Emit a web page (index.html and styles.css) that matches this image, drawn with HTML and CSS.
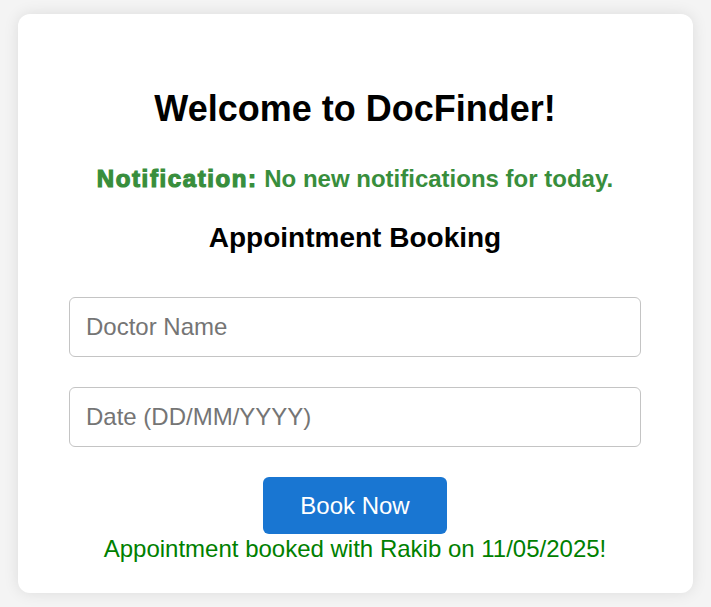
FILE: index.html
```html
<!DOCTYPE html>
<html lang="en">
<head>
<meta charset="utf-8">
<title>DocFinder</title>
<link rel="stylesheet" href="styles.css">
</head>
<body>
<div class="card">
  <h1 class="title">Welcome to DocFinder!</h1>
  <p class="notice"><strong class="notice-label">Notification:</strong> No new notifications for today.</p>
  <h2 class="subtitle">Appointment Booking</h2>
  <form class="booking">
    <input class="field" type="text" placeholder="Doctor Name">
    <input class="field" type="text" placeholder="Date (DD/MM/YYYY)">
    <button class="btn" type="button">Book Now</button>
  </form>
  <p class="message">Appointment booked with Rakib on 11/05/2025!</p>
</div>
</body>
</html>
```

FILE: styles.css
```css
html, body {
  margin: 0;
  padding: 0;
}
body {
  background: #f4f4f4;
  font-family: "Liberation Sans", Arial, sans-serif;
  padding: 14px 18px 15px;
}
.card {
  background: #ffffff;
  border-radius: 12px;
  box-shadow: 0 0 15px rgba(0, 0, 0, 0.1);
  padding: 74px 52px 30px 51px;
  text-align: center;
}
.title {
  margin: 0;
  font-size: 36px;
  line-height: 41px;
  font-weight: bold;
  color: #000;
}
.notice {
  margin: 36px 0 0;
  font-size: 24px;
  line-height: 28px;
  font-weight: bold;
  color: #388e3c;
}
.notice-label {
  -webkit-text-stroke: 1.2px #388e3c;
  letter-spacing: 1.6px;
}
.subtitle {
  margin: 29px 0 0;
  font-size: 28px;
  line-height: 32px;
  font-weight: bold;
  color: #000;
}
.booking {
  margin-top: 43px;
  display: flex;
  flex-direction: column;
  align-items: center;
  gap: 30px;
}
.field {
  box-sizing: border-box;
  width: 100%;
  height: 60px;
  padding: 0 16px;
  border: 1px solid #c4c4c4;
  border-radius: 6px;
  font-family: "Liberation Sans", Arial, sans-serif;
  font-size: 24px;
  color: #000;
  background: #fff;
}
.field::placeholder {
  color: #757575;
}
.btn {
  box-sizing: border-box;
  height: 57px;
  padding: 0 37px;
  border: none;
  border-radius: 6px;
  background: #1976d2;
  color: #fff;
  font-family: "Liberation Sans", Arial, sans-serif;
  font-size: 24px;
}
.message {
  margin: 1px 0 0;
  font-size: 24px;
  line-height: 28px;
  color: #008000;
}
```
